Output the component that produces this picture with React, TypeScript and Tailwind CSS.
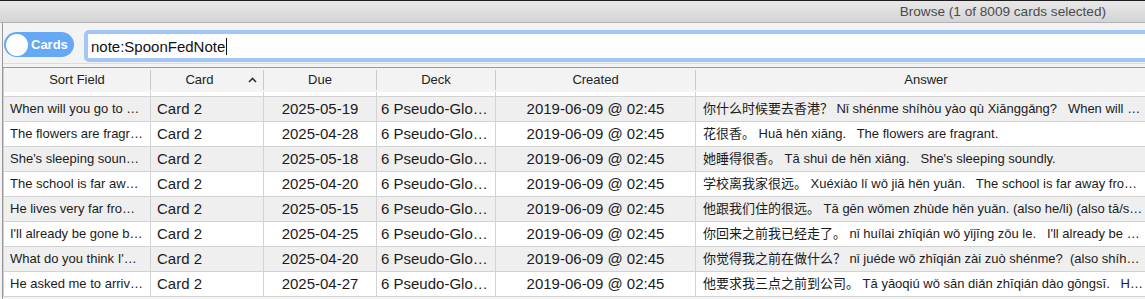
import React from "react";

type Row = { sort: string; due: string; answer: string };

const rows: Row[] = [
  {
    sort: "When will you go to Hong Kong?",
    due: "2025-05-19",
    answer: "你什么时候要去香港？ Nǐ shénme shíhòu yào qù Xiānggǎng?   When will you go to Hong Kong?",
  },
  {
    sort: "The flowers are fragrant.",
    due: "2025-04-28",
    answer: "花很香。 Huā hěn xiāng.   The flowers are fragrant.",
  },
  {
    sort: "She's sleeping soundly.",
    due: "2025-05-18",
    answer: "她睡得很香。 Tā shuì de hěn xiāng.   She's sleeping soundly.",
  },
  {
    sort: "The school is far away from my home.",
    due: "2025-04-20",
    answer: "学校离我家很远。 Xuéxiào lí wǒ jiā hěn yuǎn.   The school is far away from my home.",
  },
  {
    sort: "He lives very far from us.",
    due: "2025-05-15",
    answer: "他跟我们住的很远。 Tā gēn wǒmen zhùde hěn yuǎn. (also he/li) (also tā/she)   He lives very far from us.",
  },
  {
    sort: "I'll already be gone before you come back.",
    due: "2025-04-25",
    answer: "你回来之前我已经走了。 nǐ huílai zhīqián wǒ yǐjīng zǒu le.   I'll already be gone before you come back.",
  },
  {
    sort: "What do you think I'd been doing before?",
    due: "2025-04-20",
    answer: "你觉得我之前在做什么？ nǐ juéde wǒ zhīqián zài zuò shénme?  (also shíhou) What do you think I'd been doing?",
  },
  {
    sort: "He asked me to arrive at the company before three.",
    due: "2025-04-27",
    answer: "他要求我三点之前到公司。 Tā yāoqiú wǒ sān diǎn zhīqián dào gōngsī.   He asked me to arrive before three.",
  },
];

function HeaderCell({ w, label }: { w: string; label: string }) {
  return (
    <div className={`${w} h-full flex items-center shrink-0`}>
      <div className="flex-1 text-center text-[13px] text-[#222]">{label}</div>
      <div className="w-px h-[20px] bg-[#c8c8c8]" />
    </div>
  );
}

export default function App() {
  return (
    <div className="w-[1145px] h-[299px] overflow-hidden bg-[#f3f3f3] font-['Liberation_Sans','Noto_Sans_CJK_SC',sans-serif] text-[#1b1b1b]">
      {/* title bar */}
      <div className="h-[23px] border-t border-t-[#1e1e1e] border-b border-b-[#b2b2b2] bg-gradient-to-b from-[#e8e8e8] to-[#d4d4d4] flex items-center justify-end pr-[39px]">
        <span className="text-[13.6px] text-[#4b4b4b] leading-none">Browse (1 of 8009 cards selected)</span>
      </div>

      <div className="ml-[2px] border-l border-l-[#989898] h-[276px] overflow-hidden">
        {/* toolbar */}
        <div className="h-[40px] flex items-start">
          <div className="ml-[1px] mt-[9px] w-[70px] h-[25px] rounded-full bg-[#64a8f6] flex items-center pl-[2px] shrink-0">
            <div className="w-[22px] h-[22px] rounded-full bg-white" />
            <span className="ml-[3px] text-[13px] font-bold text-white leading-none">Cards</span>
          </div>
          <div className="ml-[10px] mt-[7px] w-[1100px] shrink-0 h-[32px] rounded-[5px] border-[4px] border-[#a3c6f6] bg-white flex items-center pl-[3px]">
            <span className="text-[15px] text-[#111] leading-none">note:SpoonFedNote</span>
            <span className="ml-[1px] w-px h-[17px] bg-[#111]" />
          </div>
        </div>
        <div className="h-px bg-[#dcdcdc]" />
        <div className="h-[3px]" />
        <div className="h-px bg-[#9c9c9c]" />

        {/* table */}
        <div className="border-l border-l-[#cfcfcf] w-[1400px]">
          <div className="h-[24px] flex bg-[#f3f3f3]">
            <HeaderCell w="w-[147px]" label="Sort Field" />
            <div className="w-[113px] h-full flex items-center shrink-0">
              <div className="flex-1 text-center text-[13px] text-[#222]">Card</div>
              <svg width="9" height="6" viewBox="0 0 9 6" className="shrink-0">
                <path d="M1 5 L4.5 1.4 L8 5" stroke="#333" strokeWidth="1.6" fill="none" />
              </svg>
              <div className="w-[6px]" />
              <div className="w-px h-[20px] bg-[#c8c8c8]" />
            </div>
            <HeaderCell w="w-[113px]" label="Due" />
            <HeaderCell w="w-[119px]" label="Deck" />
            <HeaderCell w="w-[200px]" label="Created" />
            <HeaderCell w="w-[461px]" label="Answer" />
          </div>
          <div className="bg-white">
            <div className="h-[4px] flex">
              <div className="w-[147px] border-r border-r-[#d3d3d3]" />
              <div className="w-[113px] border-r border-r-[#d3d3d3]" />
              <div className="w-[113px] border-r border-r-[#d3d3d3]" />
              <div className="w-[119px] border-r border-r-[#d3d3d3]" />
              <div className="w-[200px] border-r border-r-[#d3d3d3]" />
            </div>
            <div className="border-t border-t-[#d3d3d3]">
              {rows.map((r, i) => (
                <div
                  key={i}
                  className={`h-[25px] flex border-b border-b-[#d3d3d3] ${i % 2 === 0 ? "bg-[#efefef]" : "bg-white"}`}
                >
                  <div className="w-[147px] shrink-0 border-r border-r-[#d3d3d3] pl-[6px] pr-[7px] text-[13px] leading-[24px] overflow-hidden text-ellipsis whitespace-nowrap">
                    {r.sort}
                  </div>
                  <div className="w-[113px] shrink-0 border-r border-r-[#d3d3d3] pl-[6px] text-[15px] leading-[24px] whitespace-nowrap">
                    Card 2
                  </div>
                  <div className="w-[113px] shrink-0 border-r border-r-[#d3d3d3] text-center text-[15px] leading-[24px] whitespace-nowrap">
                    {r.due}
                  </div>
                  <div className="w-[119px] shrink-0 border-r border-r-[#d3d3d3] pl-[4px] pr-[3px] text-[15px] leading-[24px] overflow-hidden text-ellipsis whitespace-nowrap">
                    6 Pseudo-Glossary
                  </div>
                  <div className="w-[200px] shrink-0 border-r border-r-[#d3d3d3] text-center text-[15px] leading-[24px] whitespace-nowrap">
                    2019-06-09 @ 02:45
                  </div>
                  <div className="w-[449px] shrink-0 pl-[7px] pr-[1px] text-[13px] leading-[24px] overflow-hidden text-ellipsis whitespace-pre">
                    {r.answer}
                  </div>
                </div>
              ))}
            </div>
          </div>
        </div>
      </div>
    </div>
  );
}
